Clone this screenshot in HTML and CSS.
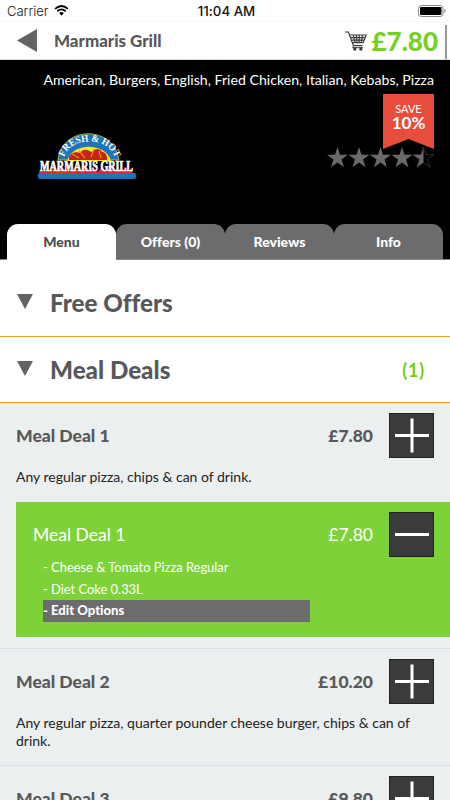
FILE: index.html
```html
<!DOCTYPE html>
<html lang="en">
<head>
  <meta charset="UTF-8">
  <meta name="viewport" content="width=device-width, initial-scale=1.0">
  <title>Marmaris Grill - Menu</title>
  <link rel="stylesheet" href="styles.css">
</head>
<body>
  <div class="status-bar">
    <div class="carrier">
      <span>Carrier</span>
      <svg class="wifi" viewBox="0 0 16 12" width="15" height="11">
        <path d="M1 4.2Q8-2 15 4.2M3.4 6.8Q8 2.8 12.6 6.8" fill="none" stroke="#000" stroke-width="1.9"/>
        <path d="M5.4 8.7Q8 6.4 10.6 8.7L8 11.6Z"/>
      </svg>
    </div>
    <span class="time">11:04 AM</span>
    <svg class="battery" viewBox="0 0 28 12" width="28" height="12">
      <rect x=".5" y=".5" width="24.5" height="11" rx="2.8" fill="none" stroke="#888"/>
      <rect x="2" y="2" width="21.5" height="8" rx="1"/>
      <path d="M26.2 4v4q1.4-.6 1.4-2t-1.4-2z" fill="#888"/>
    </svg>
  </div>

  <header class="header">
    <svg class="back" viewBox="0 0 20 23" width="20" height="23"><path d="M0 11.5L20 0v23z"/></svg>
    <h1>Marmaris Grill</h1>
    <svg class="cart" viewBox="0 0 22 20" width="22" height="20">
      <path d="M0 1h3.4l5 13.6h9.2M4.4 4h16.8l-3 7.6H7.2M5.4 6.6h14.8M6.3 9.1h12.9M8.3 4l1.6 7.6M11.3 4l.7 7.6M14.3 4l-.2 7.6M17.5 4l-1.3 7.6" fill="none" stroke="#3c3c3d" stroke-width="1.2"/>
      <path d="M8.4 14.6l-.7 2H18" fill="none" stroke="#3c3c3d" stroke-width=".9"/>
      <circle cx="9.8" cy="18" r="1.7" fill="#3c3c3d"/>
      <circle cx="15.8" cy="18" r="1.7" fill="#3c3c3d"/>
    </svg>
    <span class="total">£7.80</span>
    <span class="scrollbar"></span>
  </header>

  <section class="hero">
    <p class="cuisines">American, Burgers, English, Fried Chicken, Italian, Kebabs, Pizza</p>
    <div class="hero-row">
      <svg class="logo" viewBox="0 0 100 48" width="100" height="48">
        <defs>
          <path id="arc" d="M27 25C32 3 72 3 78 25"/>
        </defs>
        <path d="M21 27C25-8 77-8 82 27z" fill="#1b75bc" stroke="#d8c92a" stroke-width=".8"/>
        <path d="M30 28C35 9 69 9 74 28z" fill="#ffe71a"/>
        <path d="M32 27c-1-7 7-9 11-7 4-6 9-2 12-1 4-5 9-3 10 0 4 0 6 5 5 8z" fill="#c4221c"/>
        <path d="M35 21l7 4M42 18l6 7M57 16l-3 8M62 18l2 7" stroke="#ff8a00" stroke-width="1.2"/>
        <path d="M2 41l1-5 2 3 3-5 3 5 4-5 3 5 4-5 4 5 4-6 4 6 4-5 5 5 4-6 5 6 4-5 4 5 5-5 4 5 4-6 4 6 4-5 4 5 3-5 4 4 2-3 2 6z" fill="#e32720"/>
        <rect x="1" y="40" width="98" height="6" rx="2" fill="#1b75bc"/>
        <text class="logo-arc"><textPath href="#arc" startOffset="1" textLength="64" lengthAdjust="spacingAndGlyphs">FRESH &amp; HOT</textPath></text>
        <text class="logo-name" x="3" y="38" textLength="93" lengthAdjust="spacingAndGlyphs">MARMARIS GRILL</text>
      </svg>
      <div class="rating">
        <div class="save"><span>SAVE</span><b>10%</b></div>
        <svg class="stars" viewBox="0 0 108 21" width="108" height="21">
          <defs>
            <path id="star" d="M10.5 0l2.5 7.7h8L14.5 12.4l2.5 7.9-6.5-4.9L4 20.3l2.500-7.900L0 7.700h8z"/>
            <clipPath id="half"><rect width="10.5" height="21"/></clipPath>
          </defs>
          <g fill="#6a6a6a">
            <use href="#star"/>
            <use href="#star" x="21.5"/>
            <use href="#star" x="43"/>
            <use href="#star" x="64.5"/>
            <g transform="translate(86 0)">
              <use href="#star" clip-path="url(#half)"/>
              <use href="#star" fill="none" stroke="#4a4a4a" stroke-width=".6"/>
            </g>
          </g>
        </svg>
      </div>
    </div>
    <nav class="tabs">
      <a class="tab active">Menu</a>
      <a class="tab">Offers (0)</a>
      <a class="tab">Reviews</a>
      <a class="tab">Info</a>
    </nav>
  </section>

  <main>
    <div class="category">
      <span class="arrow"></span>
      <h2>Free Offers</h2>
    </div>
    <div class="category">
      <span class="arrow"></span>
      <h2>Meal Deals</h2>
      <span class="count">(1)</span>
    </div>

    <div class="item first">
      <div class="item-head">
        <h3>Meal Deal 1</h3>
        <span class="price">£7.80</span>
        <button class="btn plus"></button>
      </div>
      <p class="desc">Any regular pizza, chips &amp; can of drink.</p>
      <div class="selected">
        <div class="item-head">
          <h3>Meal Deal 1</h3>
          <span class="price">£7.80</span>
          <button class="btn"></button>
        </div>
        <ul>
          <li>- Cheese &amp; Tomato Pizza Regular</li>
          <li>- Diet Coke 0.33L</li>
          <li class="edit">- Edit Options</li>
        </ul>
      </div>
    </div>

    <div class="item">
      <div class="item-head">
        <h3>Meal Deal 2</h3>
        <span class="price">£10.20</span>
        <button class="btn plus"></button>
      </div>
      <p class="desc">Any regular pizza, quarter pounder cheese burger, chips &amp; can of drink.</p>
    </div>

    <div class="item">
      <div class="item-head">
        <h3>Meal Deal 3</h3>
        <span class="price">£9.80</span>
        <button class="btn plus"></button>
      </div>
    </div>
  </main>
</body>
</html>
```
FILE: styles.css
```css
* {
  box-sizing: border-box;
}
body {
  margin: 0;
  height: 800px;
  overflow: hidden;
  font-family: Lato, sans-serif;
  font-variant-ligatures: none;
  background: #fff;
  color: #58585a;
}
h1, h2, h3, p, ul {
  margin: 0;
  padding: 0;
}

.status-bar {
  display: grid;
  grid-template-columns: 1fr auto 1fr;
  align-items: center;
  height: 22px;
  padding: 0 4px 0 7px;
  border-bottom: 1px solid #f8f8f8;
  font-family: Inter, sans-serif;
  color: #111;
}
.carrier {
  display: flex;
  align-items: center;
  gap: 6px;
  font-size: 13px;
  font-weight: 300;
}
.time {
  font-size: 13.3px;
  font-weight: 500;
}
.battery {
  justify-self: end;
}

.header {
  display: flex;
  align-items: center;
  height: 38px;
  padding: 0 3px 0 17px;
  border-bottom: 1px solid #ddd;
}
.back {
  fill: #636365;
}
.header h1 {
  flex: 1;
  margin-left: 17px;
  font-size: 16.9px;
  font-weight: 900;
}
.cart {
  margin-right: 4px;
}
.total {
  font-size: 26px;
  font-weight: 900;
  color: #76d024;
}
.scrollbar {
  width: 2px;
  height: 34px;
  margin-left: 7px;
  margin-top: 3px;
  background: #999;
}

.hero {
  display: flex;
  flex-direction: column;
  height: 200px;
  background: #000;
  border-bottom: 1px solid #888;
}
.cuisines {
  padding: 11px 16px 0;
  line-height: 18px;
  font-size: 14.15px;
  text-align: right;
  color: #fff;
  white-space: nowrap;
}
.hero-row {
  display: flex;
  justify-content: space-between;
  flex: 1;
  padding: 5px 16px 0 37px;
}
.logo {
  margin-top: 39px;
  overflow: visible;
}
.logo-arc {
  font: 700 10px "Liberation Serif", serif;
  fill: #fff;
}
.logo-name {
  font: 700 14px "Liberation Serif", serif;
  fill: #fff;
  stroke: #fff;
  stroke-width: .7px;
}
.rating {
  display: flex;
  flex-direction: column;
  align-items: flex-end;
}
.save {
  display: flex;
  flex-direction: column;
  align-items: center;
  width: 51px;
  height: 55px;
  padding-top: 8px;
  background: #e84c3d;
  clip-path: polygon(0 0, 100% 0, 100% 100%, 50% 82%, 0 100%);
  color: #fff;
}
.save span {
  font-size: 11px;
  line-height: 13px;
}
.save b {
  font-size: 17px;
  line-height: 15px;
}
.stars {
  margin: -2px -1px 0 0;
}
.tabs {
  display: flex;
  padding: 0 7px;
}
.tab {
  flex: 1;
  height: 35px;
  border-radius: 11px 11px 0 0;
  background: #6c6c6e;
  color: #fff;
  font-size: 14px;
  font-weight: 900;
  line-height: 36px;
  text-align: center;
}
.tab.active {
  height: 36px;
  margin-bottom: -1px;
  background: #fff;
  color: #4d4d4f;
}

.category {
  display: flex;
  align-items: center;
  height: 66px;
  padding: 0 25px 0 17px;
  border-bottom: 1px solid #f9a01e;
}
.category:first-child {
  height: 77px;
  padding-top: 10px;
}
.category h2 {
  flex: 1;
  margin-left: 17px;
  padding-bottom: 1px;
  font-size: 24.2px;
  font-weight: 900;
}
.arrow {
  border: 8.5px solid transparent;
  border-top: 15px solid #636365;
  border-bottom: 0;
  margin-top: -3px;
}
.count {
  font-size: 18px;
  font-weight: 700;
  letter-spacing: .8px;
  color: #6fcc1a;
}

.item {
  padding: 10px 0 16px 16px;
  background: #ebeff0;
  border-bottom: 1px solid #dcdfe1;
}
.item.first {
  padding-bottom: 11px;
}
.item-head {
  display: flex;
  align-items: center;
  padding-right: 16px;
}
.item-head h3,
.price {
  font-size: 17.5px;
  font-weight: 900;
}
.item-head h3 {
  flex: 1;
}
.price {
  margin-right: 16px;
}
.btn {
  position: relative;
  width: 45px;
  height: 45px;
  padding: 0;
  border: 1px solid #222;
  background: #3b3b3d;
}
.btn::before,
.btn.plus::after {
  content: "";
  position: absolute;
  top: 20px;
  left: 5px;
  width: 34px;
  height: 3px;
  background: #fff;
}
.btn.plus::after {
  transform: rotate(90deg);
}
.desc {
  padding: 10px 16px 0 0;
  font-size: 14px;
  line-height: 17.5px;
  color: #222;
}
.selected {
  height: 135px;
  margin-top: 16.5px;
  padding: 10px 0 0 17px;
  background: #7dd237;
  color: #fff;
}
.selected h3,
.selected .price {
  font-weight: 400;
}
.selected ul {
  width: 267px;
  margin-left: 10px;
  list-style: none;
  font-size: 12.9px;
  line-height: 21.5px;
}
.selected .edit {
  background: #6c6c6e;
  font-size: 13.1px;
  font-weight: 900;
}
```
